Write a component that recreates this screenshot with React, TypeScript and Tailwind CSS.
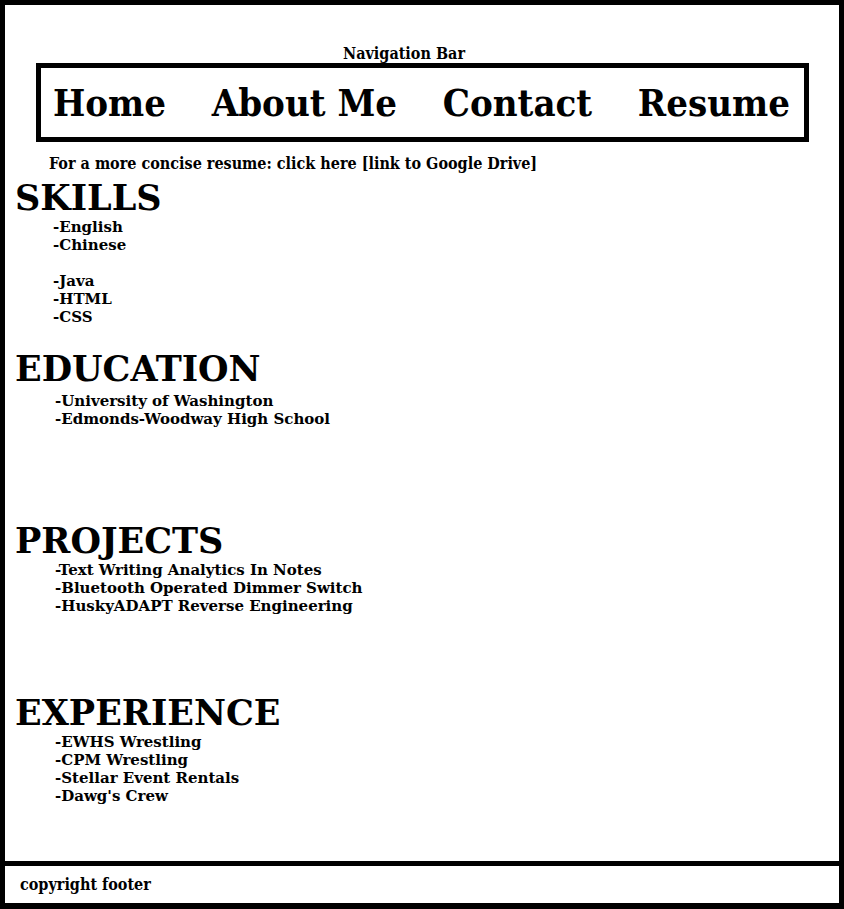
const serif = "font-['DejaVu_Serif',serif]";
const narrow = "font-['DejaVu_Serif_Condensed','DejaVu_Serif',serif] [font-stretch:condensed]";

const sections = [
  { title: 'SKILLS', items: ['-English', '-Chinese', '', '-Java', '-HTML', '-CSS'], indent: 'pl-[48px]', gap: 'mt-[2px]', after: 'h-[25px]' },
  { title: 'EDUCATION', items: ['-University of Washington', '-Edmonds-Woodway High School'], indent: 'pl-[50px]', gap: 'mt-[5px]', after: 'h-[95px]' },
  { title: 'PROJECTS', items: ['-Text Writing Analytics In Notes', '-Bluetooth Operated Dimmer Switch', '-HuskyADAPT Reverse Engineering'], indent: 'pl-[50px]', gap: 'mt-[2px]', after: 'h-[80px]' },
  { title: 'EXPERIENCE', items: ['-EWHS Wrestling', '-CPM Wrestling', '-Stellar Event Rentals', "-Dawg's Crew"], indent: 'pl-[50px]', gap: 'mt-[2px]', after: '' },
]

export default function App() {
  return (
    <div className="w-[844px] h-[909px] flex flex-col bg-white text-black">
      {/* page body */}
      <main className="h-[866px] border-[5px] border-black pt-[39px]">
        <p className={`${narrow} text-center pr-[36px] text-[16px] font-bold leading-[19px]`}>Navigation Bar</p>
        <nav className="ml-[31px] mr-[30px] h-[79px] border-[5px] border-black flex items-center justify-between pl-[12px] pr-[14px]">
          {['Home', 'About Me', 'Contact', 'Resume'].map((n) => (
            <span key={n} className={`${narrow} text-[38px] font-bold leading-none`}>{n}</span>
          ))}
        </nav>
        <p className={`${narrow} ml-[44px] mt-[13px] text-[16px] font-bold leading-[18px]`}>
          For a more concise resume: click here [link to Google Drive]
        </p>

        <div className="mt-[7px]">
          {sections.map((s) => (
            <section key={s.title}>
              <h2 className={`${serif} pl-[10px] text-[35px] font-bold leading-[36px]`}>{s.title}</h2>
              <ul className={`${s.indent} ${s.gap}`}>
                {s.items.map((it, i) => (
                  <li key={i} className={`${serif} text-[15px] font-bold leading-[18px] h-[18px]`}>{it}</li>
                ))}
              </ul>
              {s.after && <div className={s.after} />}
            </section>
          ))}
        </div>
      </main>
      <footer className="h-[43px] border-x-[5px] border-b-[6px] border-black flex items-center pl-[15px]">
        <span className={`${narrow} text-[16px] font-bold`}>copyright footer</span>
      </footer>
    </div>
  )
}
